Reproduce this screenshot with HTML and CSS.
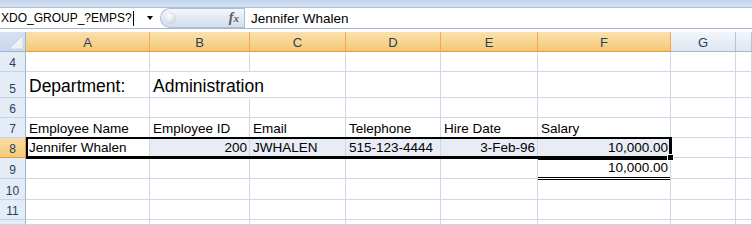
FILE: index.html
```html
<!DOCTYPE html>
<html>
<head>
<meta charset="utf-8">
<link rel="stylesheet" href="styles.css">
</head>
<body>
<div class="ribbon"></div>
<div class="fbar">
  <div class="namebox"><span class="nb-text">XDO_GROUP_?EMPS?</span><span class="caret"></span><span class="nb-arrow"></span></div>
  <div class="pill"><span class="knob"></span><span class="fx">f<i>x</i></span></div>
  <div class="formula">Jennifer Whalen</div>
</div>
<div class="gap"></div>
<div class="sheet">
  <div class="corner"><svg width="14" height="14" viewBox="0 0 14 14"><polygon points="0,14 14,14 14,0" fill="#eef1f5" stroke="#b9c6d6" stroke-width="0.6"/></svg></div>
  <div class="ch sel">A</div><div class="ch sel">B</div><div class="ch sel">C</div><div class="ch sel">D</div><div class="ch sel">E</div><div class="ch sel">F</div><div class="ch">G</div><div class="ch"></div>

  <div class="rh">4</div>
  <div class="c"></div><div class="c"></div><div class="c"></div><div class="c"></div><div class="c"></div><div class="c"></div><div class="c"></div><div class="c"></div>

  <div class="rh">5</div>
  <div class="c big">Department:</div><div class="c big spill">Administration</div><div class="c"></div><div class="c"></div><div class="c"></div><div class="c"></div><div class="c"></div><div class="c"></div>

  <div class="rh">6</div>
  <div class="c"></div><div class="c"></div><div class="c"></div><div class="c"></div><div class="c"></div><div class="c"></div><div class="c"></div><div class="c"></div>

  <div class="rh">7</div>
  <div class="c">Employee Name</div><div class="c">Employee ID</div><div class="c">Email</div><div class="c">Telephone</div><div class="c">Hire Date</div><div class="c">Salary</div><div class="c"></div><div class="c"></div>

  <div class="rh sel">8</div>
  <div class="c row8">Jennifer Whalen</div><div class="c row8 hl r">200</div><div class="c row8 hl">JWHALEN</div><div class="c row8 hl">515-123-4444</div><div class="c row8 hl r">3-Feb-96</div><div class="c row8 hl r">10,000.00</div><div class="c"></div><div class="c"></div>

  <div class="rh">9</div>
  <div class="c"></div><div class="c"></div><div class="c"></div><div class="c"></div><div class="c"></div><div class="c total"><div class="tot">10,000.00</div></div><div class="c"></div><div class="c"></div>

  <div class="rh">10</div>
  <div class="c"></div><div class="c"></div><div class="c"></div><div class="c"></div><div class="c"></div><div class="c"></div><div class="c"></div><div class="c"></div>

  <div class="rh">11</div>
  <div class="c"></div><div class="c"></div><div class="c"></div><div class="c"></div><div class="c"></div><div class="c"></div><div class="c"></div><div class="c"></div>

  <div class="rh"></div>
  <div class="c"></div><div class="c"></div><div class="c"></div><div class="c"></div><div class="c"></div><div class="c"></div><div class="c"></div><div class="c"></div>

  <div class="sel-box"></div>
  <div class="handle"></div>
</div>
</body>
</html>
```

FILE: styles.css
```css
* { box-sizing: border-box; }
body {
  margin: 0;
  width: 752px;
  height: 225px;
  overflow: hidden;
  background: #fff;
  font-family: "Liberation Sans", Arial, sans-serif;
  color: #000;
}
.ribbon {
  height: 8px;
  background: linear-gradient(#c2d4eb, #d6e3f3);
  border-bottom: 1px solid #a9bfda;
}
.fbar {
  height: 21px;
  display: flex;
  border-bottom: 1px solid #a6b9d1;
  background: #fff;
}
.namebox {
  width: 160px;
  display: flex;
  align-items: center;
  font-size: 12px;
  padding-left: 1px;
}
.caret {
  width: 1px;
  height: 15px;
  background: #000;
  margin-left: 1px;
}
.nb-arrow {
  margin-left: auto;
  margin-right: 7px;
  width: 0;
  height: 0;
  border-left: 3.5px solid transparent;
  border-right: 3.5px solid transparent;
  border-top: 4px solid #000;
}
.pill {
  width: 84px;
  display: flex;
  align-items: center;
  justify-content: space-between;
  border: 1px solid #a9bdd6;
  border-right: none;
  border-radius: 10px 0 0 10px;
  background: linear-gradient(#f6f8fb, #e2e9f3 50%, #d5dfec);
  padding: 0 5px 0 3px;
}
.knob {
  width: 12px;
  height: 12px;
  border-radius: 50%;
  background: radial-gradient(circle at 40% 35%, #ffffff, #c1c8d2);
}
.fx {
  font-family: "Liberation Serif", serif;
  font-style: italic;
  font-weight: bold;
  font-size: 14px;
  color: #5a5a5a;
}
.fx i { font-size: 11px; }
.formula {
  flex: 1;
  border-left: 1px solid #a9bdd6;
  padding-left: 6px;
  display: flex;
  align-items: center;
  font-size: 13.5px;
}
.gap { height: 3px; }

.sheet {
  position: relative;
  display: grid;
  grid-template-columns: 26px 124px 100px 96px 95px 97px 133px 65px 1fr;
  grid-template-rows: 20px 20px 26px 20px 20px 20px 21px 21px 20px 1fr;
  height: 193px;
}
.corner {
  background: linear-gradient(#d6e2f2, #c8d7ec);
  border-right: 1px solid #9eb6ce;
  border-bottom: 1px solid #9eb6ce;
  display: flex;
  align-items: flex-end;
  justify-content: flex-end;
  padding: 0 2px 2px 0;
}
.corner svg { display: block; }
.ch {
  display: flex;
  align-items: center;
  justify-content: center;
  padding-top: 2px;
  font-size: 13px;
  color: #27405c;
  background: linear-gradient(#f3f6fb, #dfe6f0);
  border-right: 1px solid #b4c5da;
  border-bottom: 1px solid #9eb6ce;
}
.ch.sel {
  background: linear-gradient(#fae0ae, #f7d38c 60%, #f4c772);
  border-right-color: #f4a757;
  border-bottom-color: #f29536;
}
.rh {
  display: flex;
  align-items: flex-end;
  justify-content: center;
  padding-bottom: 1px;
  font-size: 12px;
  line-height: 14px;
  color: #27405c;
  background: #e4ecf7;
  border-right: 1px solid #9eb6ce;
  border-bottom: 1px solid #c5d3e3;
}
.rh.sel {
  background: linear-gradient(#f9dca5, #f5cb7a);
  border-bottom-color: #f29536;
  border-right-color: #f29536;
}
.c {
  display: flex;
  align-items: flex-end;
  padding: 0 2px 1px 3px;
  font-size: 13.5px;
  line-height: 15px;
  white-space: nowrap;
  border-right: 1px solid #d0d7e5;
  border-bottom: 1px solid #d0d7e5;
}
.r { justify-content: flex-end; }
.row8 { padding-bottom: 2px; }
.hl { background: #e8ecf5; }
.big { font-size: 17.5px; line-height: 20px; }
.spill { border-right-color: transparent; }
.total {
  border-bottom: none;
  padding: 1px 0 0 0;
  margin-bottom: -1px;
}
.tot {
  flex: 1;
  display: flex;
  align-items: flex-end;
  justify-content: flex-end;
  padding: 0 2px 2px 3px;
  border-top: 1px solid #000;
  border-bottom: 3px double #000;
}
.sel-box {
  position: absolute;
  left: 26px;
  top: 105px;
  width: 646px;
  height: 22px;
  border: solid #000;
  border-width: 2px 3px 3px 2px;
  pointer-events: none;
}
.handle {
  position: absolute;
  left: 667px;
  top: 122px;
  width: 7px;
  height: 7px;
  background: #000;
  border: 1px solid #fff;
}
```
